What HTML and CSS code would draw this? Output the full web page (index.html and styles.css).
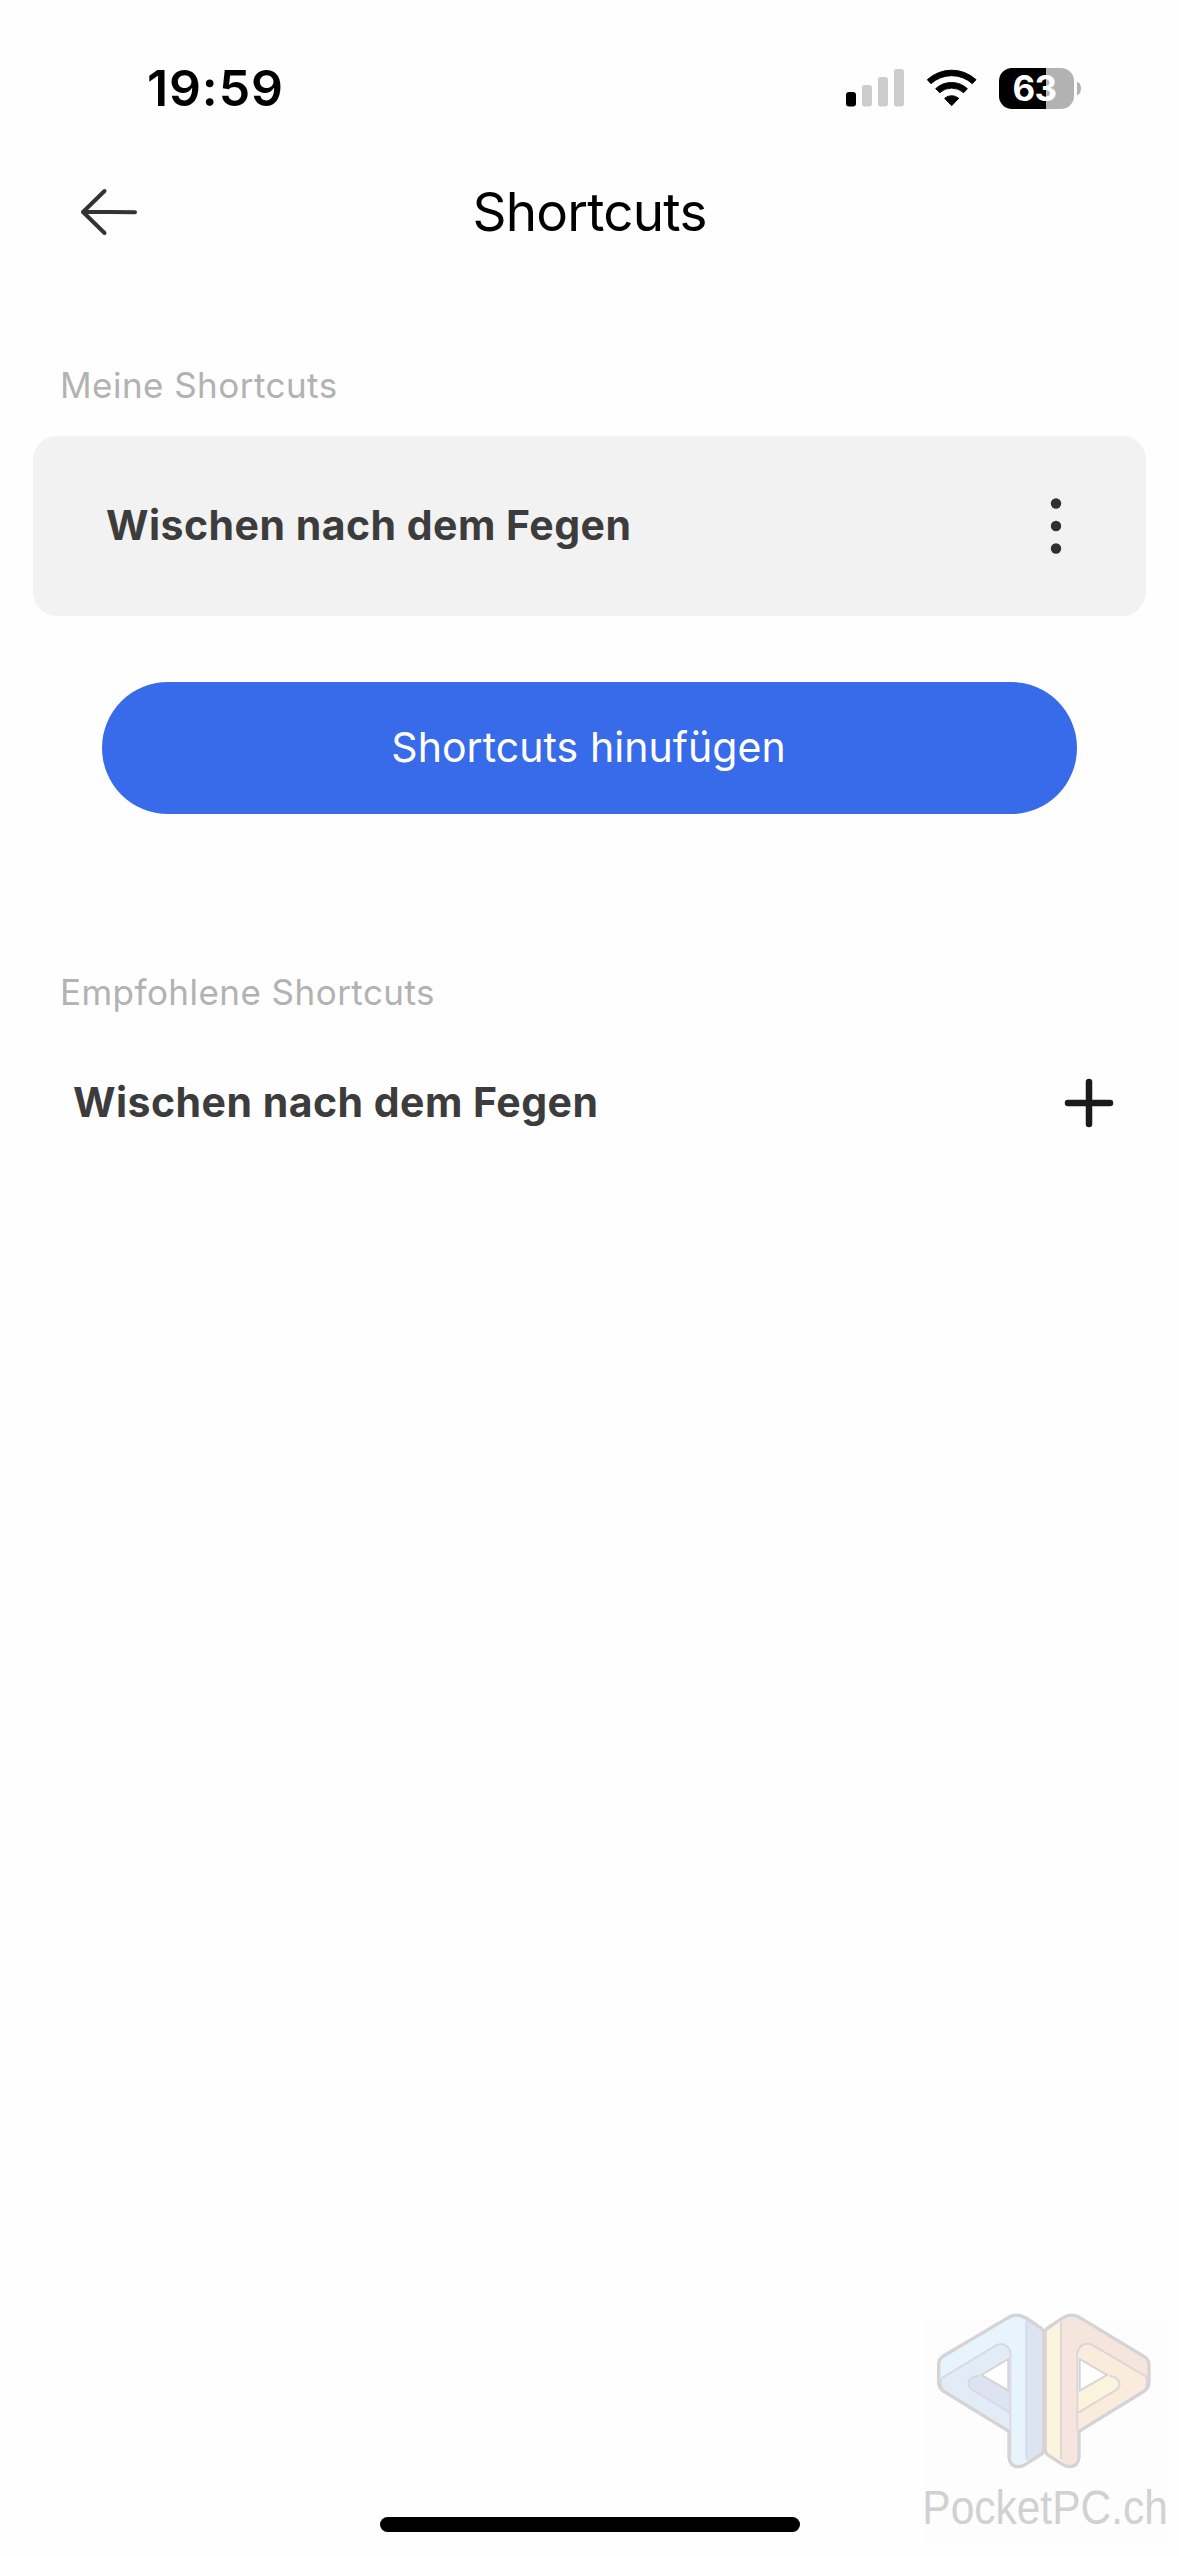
FILE: index.html
```
<!DOCTYPE html>
<html lang="de">
    <head>
        <meta charset="utf-8">
        <meta name="viewport" content="width=device-width, initial-scale=1.0">
        <title>Shortcuts</title>
        <link rel="stylesheet" href="styles.css">
    </head>
    <body>
        <div class="status-bar">
            <span class="time">19:59</span>
            <div class="status-icons">
                <svg class="signal" viewBox="0 0 58 38">
                    <rect x="0" y="23" width="10" height="14.5" rx="3" fill="#000"/>
                    <rect x="16" y="16" width="10" height="21.5" rx="3"/>
                    <rect x="32" y="8" width="10" height="29.5" rx="3"/>
                    <rect x="48" y="0" width="10" height="37.5" rx="3"/>
                </svg>
                <svg class="wifi" viewBox="318 86 153 114">
                    <path d="M322 118 A108 108 0 0 1 468 118 L457 130 A92 92 0 0 0 333 130 Z"/>
                    <path d="M347 145 A70 70 0 0 1 442 145 L431 157 A54 54 0 0 0 359 157 Z"/>
                    <path d="M374 174 A32 32 0 0 1 416 174 L395 196 Z"/>
                </svg>
                <div class="battery">
                    <span class="battery-level">63</span>
                    <span class="battery-tip"></span>
                </div>
            </div>
        </div>

        <header class="header">
            <svg class="back" viewBox="0 0 60 50">
                <path d="M25.5 4 L4 25 L25.5 46 M4 24.8 L56 25.2"/>
            </svg>
            <h1>Shortcuts</h1>
        </header>

        <main>
            <h2>Meine Shortcuts</h2>
            <div class="card">
                <span class="name">Wischen nach dem Fegen</span>
                <svg class="more" viewBox="0 0 12 58">
                    <circle cx="6" cy="6.5" r="5.2"/>
                    <circle cx="6" cy="29" r="5.2"/>
                    <circle cx="6" cy="51.5" r="5.2"/>
                </svg>
            </div>
            <button class="add-btn">Shortcuts hinufügen</button>

            <h2>Empfohlene Shortcuts</h2>
            <div class="row">
                <span class="name">Wischen nach dem Fegen</span>
                <svg class="plus" viewBox="0 0 50 50">
                    <path d="M25 4 V46 M4 25 H46"/>
                </svg>
            </div>
        </main>

        <div class="home-indicator"></div>

        <svg class="watermark" viewBox="0 0 807 798">
            <rect x="38" y="72" width="738" height="694" fill="#fdfdfd"/>
            <!-- left half, blue -->
            <path fill="#e7f4fc" d="M88 265 V222 Q88 208 100 200 L300 82 Q320 71 342 82 L350 90 V505 Q345 528 325 528 Q299 525 299 503 V190 Q292 160 268 163 Z"/>
            <path fill="#dde3f0" d="M350 90 L390 113 Q402 120 402 132 V478 Q401 486 392 490 L350 518 Z"/>
            <path fill="#e2ecf6" d="M93 264 L258 166 Q290 152 301 190 L299 204 L213 255 L299 306 V422 L100 302 Q88 292 88 275 Z"/>
            <path fill="#dde3f0" d="M213 255 L299 306 V368 L184 298 Q168 276 184 262 Q195 254 213 255 Z"/>
            <g class="seam blue">
                <path d="M94 265 L258 166 Q285 152 301 184 V500"/>
                <path d="M94 265 Q90 285 98 298"/>
                <path d="M349 92 V508"/>
                <path d="M205 258 Q172 262 176 284 Q178 294 188 300 L299 368"/>
            </g>
            <!-- right half, orange -->
            <path fill="#f6e5dd" d="M453 95 Q475 72 502 84 L704 203 Q716 212 716 226 V262 L545 166 Q514 152 503 188 V500 Q502 526 480 528 Q454 526 453 500 Z"/>
            <path fill="#faf4dc" d="M453 95 L418 116 Q408 122 408 135 V478 Q409 488 418 493 L453 516 Z"/>
            <path fill="#f9ecdc" d="M503 188 Q514 152 545 166 L710 262 Q722 290 700 305 L505 423 V308 L591 255 L508 204 Z"/>
            <path fill="#faf4dc" d="M505 308 L591 260 Q612 254 624 268 Q634 288 618 300 L505 367 Z"/>
            <g class="seam">
                <path d="M453 95 V508"/>
                <path d="M502 422 V188 Q514 152 545 164 L708 259 Q714 275 706 298"/>
                <path d="M598 257 Q625 260 629 282 Q628 294 618 300 L505 368"/>
            </g>
            <g class="outline">
                <path d="M402 124 Q400 118 390 112 L348 84 Q320 68 296 82 L100 198 Q86 207 86 223 V276 Q86 294 100 303 L297 424 V502 Q300 530 325 530 Q335 530 345 524 L388 497 Q402 489 402 476 Z"/>
                <path d="M405 124 Q407 118 416 112 L458 84 Q482 68 508 82 L703 200 Q717 209 717 224 V277 Q717 294 703 303 L507 424 V502 Q504 530 479 530 Q468 530 459 524 L420 499 Q405 490 405 476 V124"/>
                <path class="hole" d="M295 207 V302 L214 255 Z"/>
                <path class="hole" d="M509 207 V302 L591 255 Z"/>
            </g>
            <text transform="translate(37 702) scale(0.885 1)">PocketPC.ch</text>
        </svg>
    </body>
</html>
```

FILE: styles.css
```
* {
    margin: 0;
    padding: 0;
    box-sizing: border-box;
}

body {
    position: relative;
    display: flex;
    flex-direction: column;
    height: 2556px;
    background: #fefefe;
    font-family: Inter, "Liberation Sans", sans-serif;
    overflow: hidden;
}

svg {
    display: block;
    flex-shrink: 0;
}

.status-bar {
    display: flex;
    justify-content: space-between;
    align-items: center;
    height: 176px;
    padding: 0 98px 0 147px;
}

.time {
    font-size: 50px;
    font-weight: 600;
    letter-spacing: 0.87px;
}

.status-icons {
    display: flex;
    align-items: center;
    gap: 22px;
}

.signal {
    width: 58px;
    height: 38px;
    fill: #ccc;
}

.wifi {
    width: 51px;
    height: 38px;
    stroke: #000;
    stroke-width: 3;
    stroke-linejoin: round;
}

.battery {
    display: flex;
    align-items: center;
    gap: 3px;
}

.battery-level {
    width: 75px;
    height: 41px;
    padding-right: 4px;
    border-radius: 13px;
    background: linear-gradient(90deg, #000 47px, #b2b2b2 47px);
    color: #fff;
    font-size: 35px;
    font-weight: 700;
    line-height: 41px;
    letter-spacing: -0.7px;
    text-align: center;
}

.battery-tip {
    width: 4px;
    height: 13px;
    border-radius: 0 4px 4px 0 / 0 7px 7px 0;
    background: #b2b2b2;
}

.header {
    display: grid;
    grid-template-columns: 100px 1fr 100px;
    align-items: center;
    height: 72px;
    padding: 0 78px;
}

.back {
    width: 60px;
    height: 50px;
    margin-left: 1px;
    fill: none;
    stroke: #333;
    stroke-width: 4;
    stroke-linecap: round;
    stroke-linejoin: round;
}

h1 {
    font-size: 53px;
    font-weight: 400;
    letter-spacing: -0.77px;
    text-align: center;
}

main {
    display: flex;
    flex-direction: column;
    padding: 112px 33px 0;
}

h2 {
    padding-left: 27px;
    color: #b2b2b2;
    font-size: 35px;
    font-weight: 400;
    line-height: 51px;
    letter-spacing: 0.46px;
}

.card {
    display: flex;
    justify-content: space-between;
    align-items: center;
    height: 180px;
    margin-top: 25px;
    padding: 0 84px 0 73px;
    border-radius: 24px;
    background: #f2f2f2;
}

.name {
    margin-top: -2px;
    color: #3c3c3c;
    font-size: 41px;
    font-weight: 700;
    line-height: 50px;
    letter-spacing: 0.47px;
}

.more {
    width: 12px;
    height: 58px;
    fill: #303030;
}

.add-btn {
    height: 132px;
    margin: 66px 69px 153px;
    padding: 0 2px 2px 0;
    border: none;
    border-radius: 66px;
    background: #386bea;
    color: #fff;
    font-family: inherit;
    font-size: 41px;
    letter-spacing: 0.05px;
}

.row {
    display: flex;
    justify-content: space-between;
    align-items: center;
    height: 100px;
    margin-top: 35px;
    padding: 0 32px 0 40px;
}

.plus {
    width: 50px;
    height: 50px;
    fill: none;
    stroke: #1a1a1a;
    stroke-width: 6.5;
    stroke-linecap: round;
}

.home-indicator {
    width: 420px;
    height: 15px;
    margin: auto auto 24px;
    border-radius: 8px;
    background: #000;
}

.watermark {
    position: absolute;
    right: 0;
    bottom: 0;
    width: 269px;
    height: 266px;
}

.watermark text {
    fill: #d1d1d1;
    font-family: "Liberation Sans", Arial, sans-serif;
    font-size: 144px;
}

.seam {
    fill: none;
    stroke: #ddd5da;
    stroke-width: 6;
}

.blue {
    stroke: #d6d9e8;
}

.outline {
    fill: none;
    stroke: #d5d3d4;
    stroke-width: 10;
    stroke-linejoin: round;
}

.hole {
    fill: #fff;
    stroke-width: 6;
}
```
